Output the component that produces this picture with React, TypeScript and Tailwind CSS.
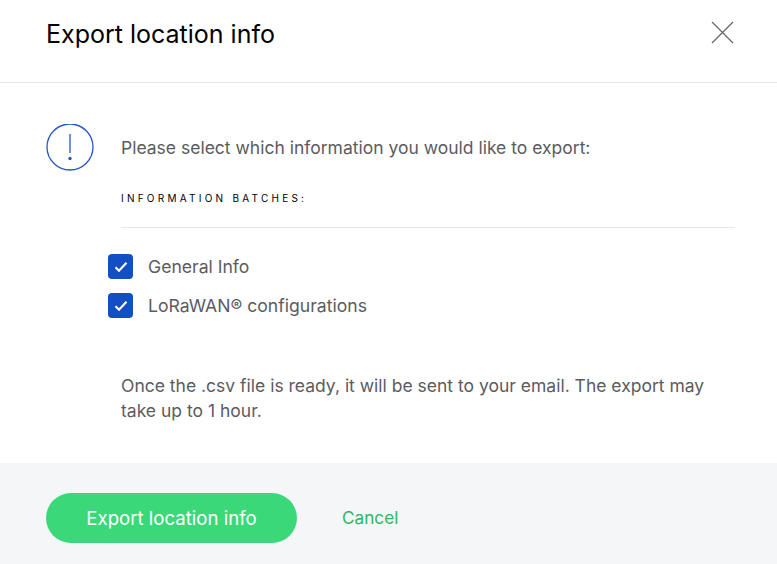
import React from 'react';

const Check = () => (
  <span className="flex h-[25px] w-[25px] items-center justify-center rounded-[4px] bg-[#134ec4]">
    <svg width="14" height="12" viewBox="0 0 14 12" fill="none">
      <path d="M1.5 6.2L5 9.8L12.5 1.8" stroke="white" strokeWidth="2.1" />
    </svg>
  </span>
);

const App = () => {
  return (
    <div className="flex h-[564px] w-[777px] flex-col overflow-hidden bg-white font-['Inter',sans-serif] text-[#5b5b60]">
      {/* Header */}
      <div className="flex h-[83px] shrink-0 items-start justify-between border-b border-[#e6e6e6] pl-[46px] pr-[43px]">
        <h1 className="mt-[18px] text-[25px] leading-[32px] font-normal text-black">Export location info</h1>
        <svg className="mt-[21px]" width="23" height="23" viewBox="0 0 23 23" fill="none">
          <path d="M1 1L22 22M22 1L1 22" stroke="#666666" strokeWidth="1.2" />
        </svg>
      </div>

      {/* Body */}
      <div className="flex h-[380px] shrink-0 flex-col pl-[46px] pr-[42px] pt-[41px]">
        <div className="flex items-center gap-[27px]">
          <svg width="48" height="48" viewBox="0 0 48 48" fill="none">
            <circle cx="24" cy="23" r="23" stroke="#2456c8" strokeWidth="1.3" />
            <path d="M24 10V29" stroke="#2456c8" strokeWidth="1.3" />
            <circle cx="24" cy="34.5" r="1.7" fill="#2456c8" />
          </svg>
          <p className="text-[17.5px] leading-[24px]">Please select which information you would like to export:</p>
        </div>
        <div className="ml-[75px] mt-[19px] border-b border-[#e6e6e6] pb-[22px]">
          <p className="text-[10px] leading-[14px] tracking-[3.25px] text-black">INFORMATION BATCHES:</p>
        </div>
        <div className="ml-[62px] mt-[26px] flex flex-col gap-[14px]">
          <label className="flex items-center gap-[15px] text-[17.6px] leading-[25px]">
            <Check />
            General Info
          </label>
          <label className="flex items-center gap-[15px] text-[17.6px] leading-[25px]">
            <Check />
            LoRaWAN® configurations
          </label>
        </div>
        <p className="ml-[75px] mt-[55px] text-[17.5px] leading-[25px]">
          Once the .csv file is ready, it will be sent to your email. The export may take up to 1 hour.
        </p>
      </div>

      {/* Footer */}
      <div className="flex flex-1 items-center bg-[#f5f6f8] pl-[46px] pt-[9px]">
        <button className="h-[50px] w-[251px] rounded-full bg-[#3bd879] pt-[2px] text-[18.6px] text-white">Export location info</button>
        <button className="ml-[45px] text-[17.2px] text-[#2fb765]">Cancel</button>
      </div>
    </div>
  );
};

export default App;
